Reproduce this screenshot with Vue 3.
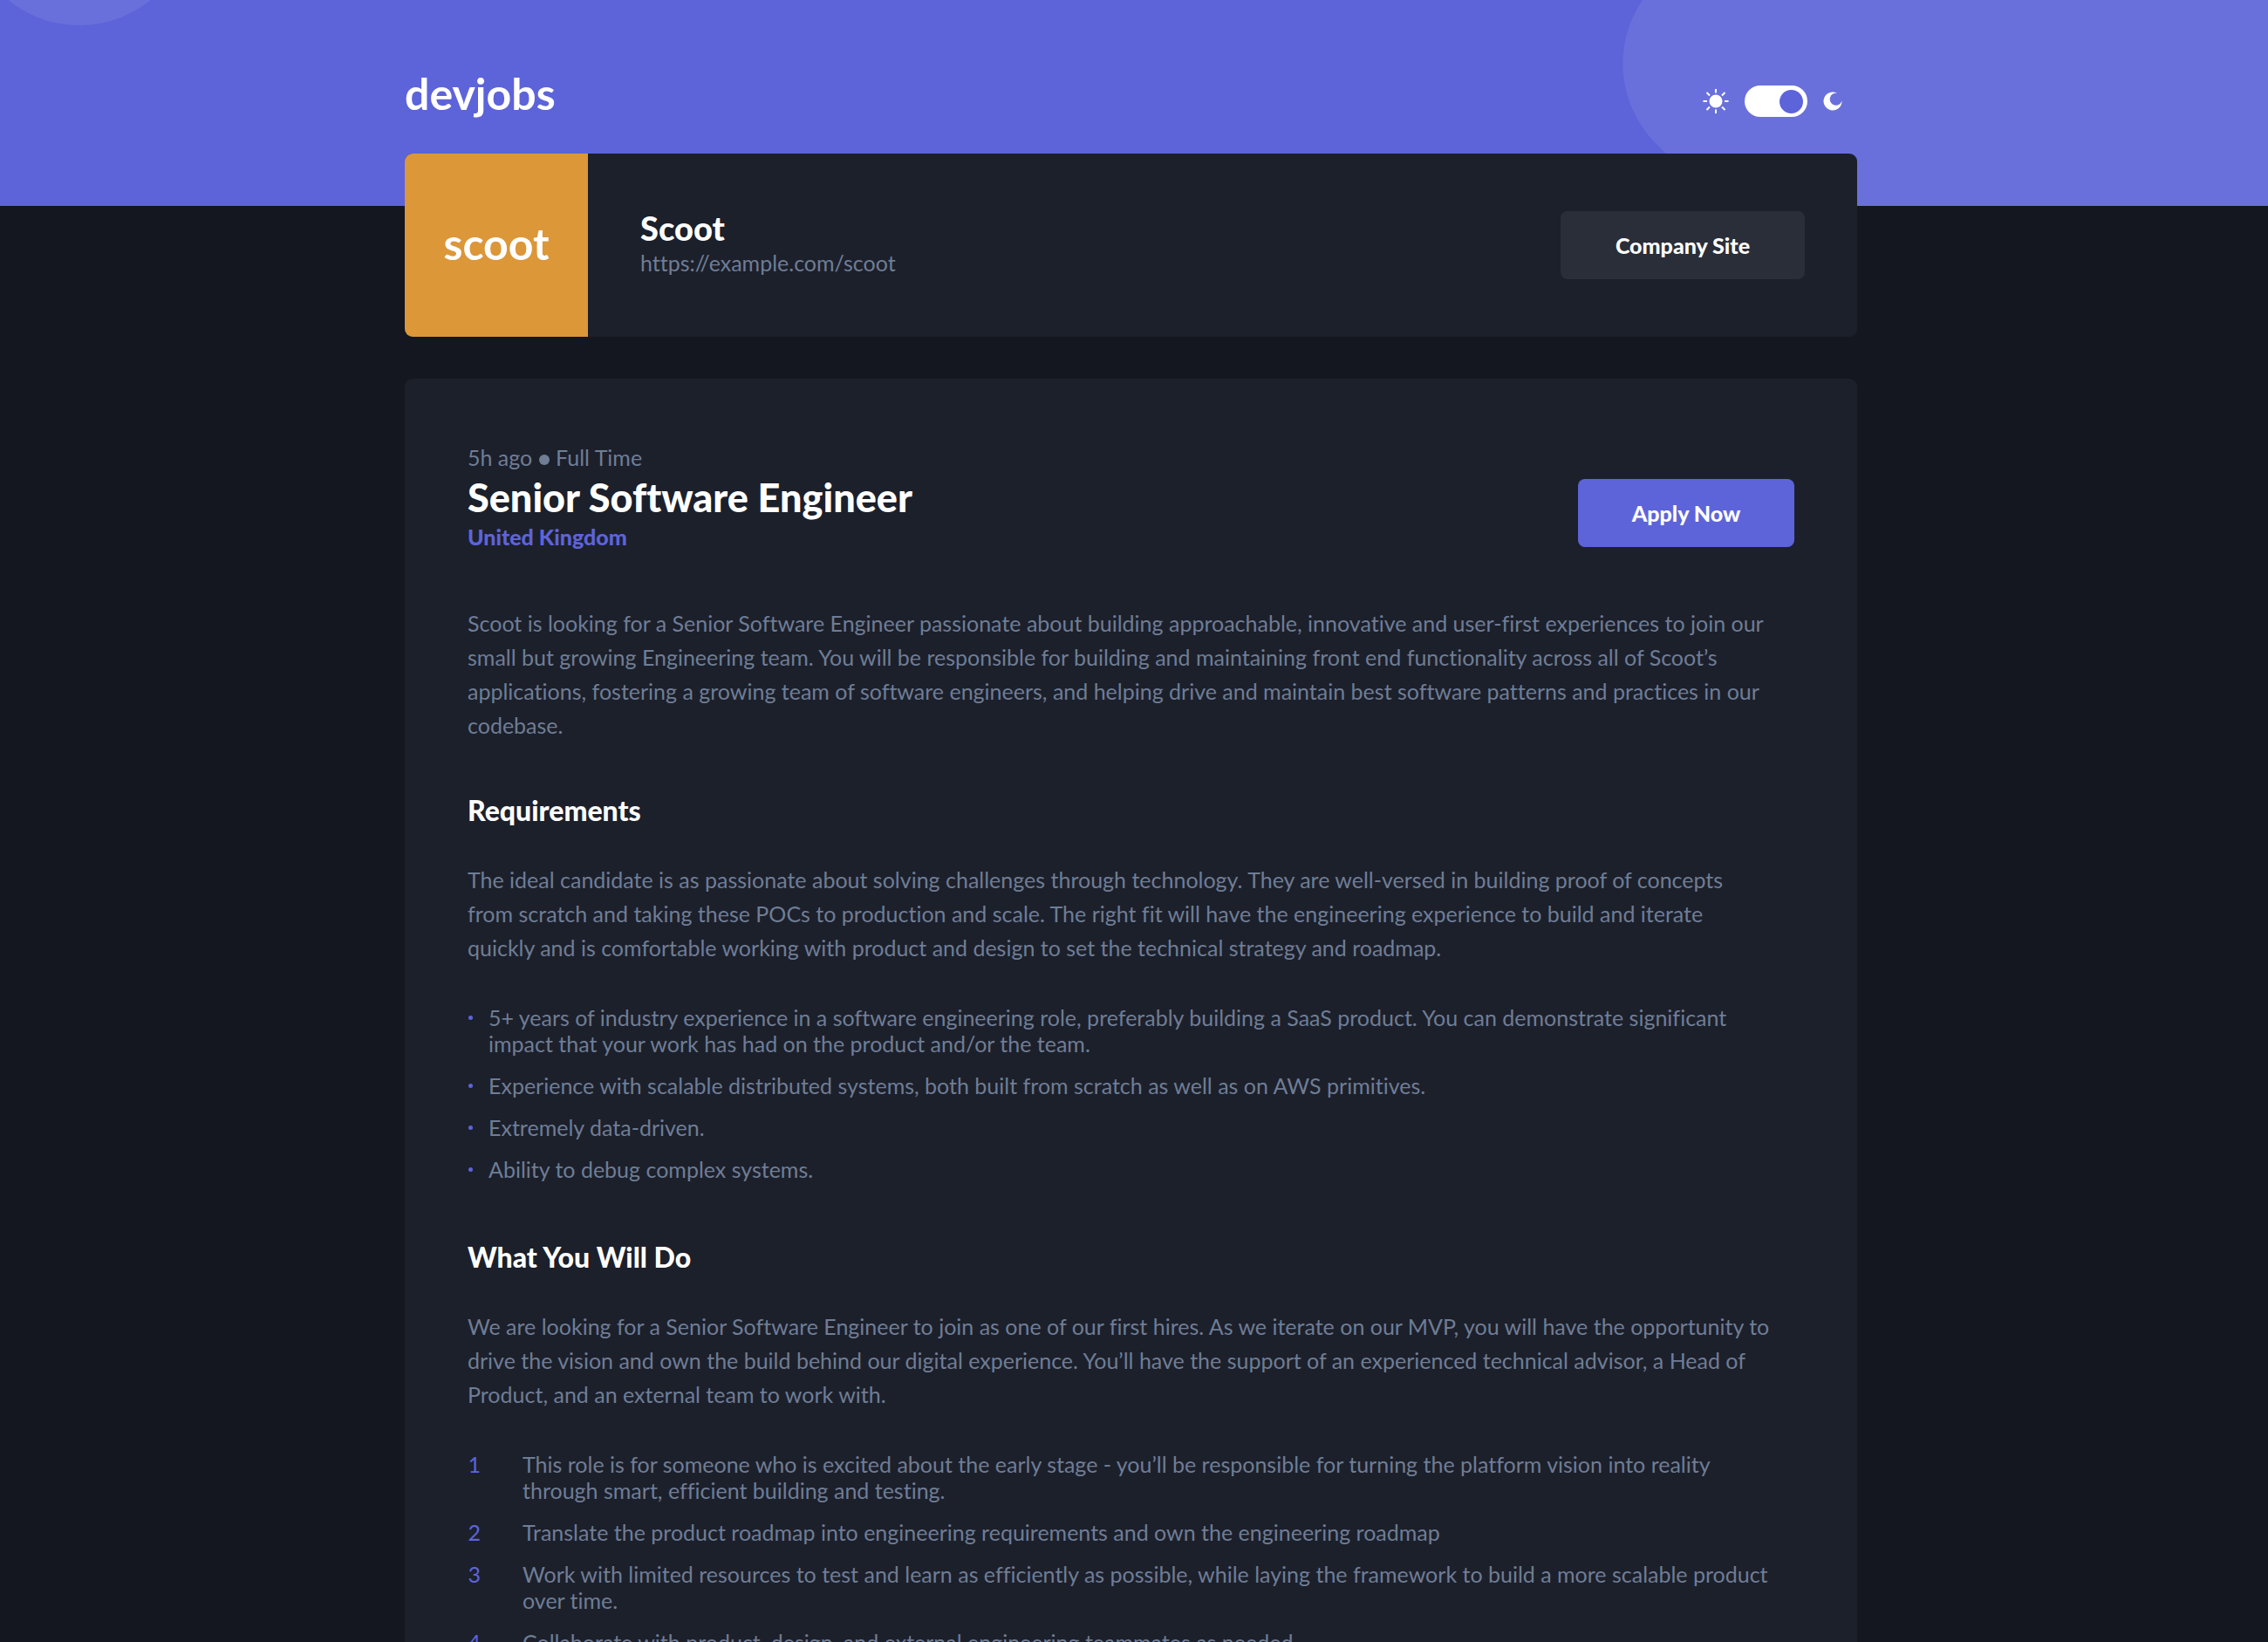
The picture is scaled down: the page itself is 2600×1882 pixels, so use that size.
<script setup>
import { ref } from 'vue'

const dark = ref(true)

const intro = `Scoot is looking for a Senior Software Engineer passionate about building approachable, innovative and user-first experiences to join our
small but growing Engineering team. You will be responsible for building and maintaining front end functionality across all of Scoot’s
applications, fostering a growing team of software engineers, and helping drive and maintain best software patterns and practices in our
codebase.`

const requirementsText = `The ideal candidate is as passionate about solving challenges through technology. They are well-versed in building proof of concepts
from scratch and taking these POCs to production and scale. The right fit will have the engineering experience to build and iterate
quickly and is comfortable working with product and design to set the technical strategy and roadmap.`

const requirements = [
  `5+ years of industry experience in a software engineering role, preferably building a SaaS product. You can demonstrate significant
impact that your work has had on the product and/or the team.`,
  'Experience with scalable distributed systems, both built from scratch as well as on AWS primitives.',
  'Extremely data-driven.',
  'Ability to debug complex systems.',
]

const roleText = `We are looking for a Senior Software Engineer to join as one of our first hires. As we iterate on our MVP, you will have the opportunity to
drive the vision and own the build behind our digital experience. You’ll have the support of an experienced technical advisor, a Head of
Product, and an external team to work with.`

const duties = [
  `This role is for someone who is excited about the early stage - you’ll be responsible for turning the platform vision into reality
through smart, efficient building and testing.`,
  'Translate the product roadmap into engineering requirements and own the engineering roadmap',
  `Work with limited resources to test and learn as efficiently as possible, while laying the framework to build a more scalable product
over time.`,
  'Collaborate with product, design, and external engineering teammates as needed.',
]
</script>

<template>
  <div class="page">
    <header class="banner">
      <svg class="shapes" aria-hidden="true">
        <circle cx="91" cy="-100" r="129" />
        <path d="M1883 0A129 129 0 0 0 1898 164L1970 236H4000V0Z" />
      </svg>
      <div class="wrap bar">
        <a class="logo" href="#">devjobs</a>
        <div class="theme">
          <svg width="30" height="30" viewBox="0 0 30 30" aria-hidden="true">
            <circle cx="15" cy="15" r="7.500" fill="#fff" />
            <path d="M15 1V5.500M15 24.500V29M0.500 15H5M25 15H29.500M4.500 5L8 8.500M22 21.500L25.500 25M4.500 25L8 21.500M22 8.500L25.500 5" stroke="#fff" stroke-width="2" />
          </svg>
          <input v-model="dark" class="switch" type="checkbox" role="switch" aria-label="Dark mode" />
          <svg width="22" height="22" viewBox="0 0 22 22" aria-hidden="true">
            <path d="M16.100 1.800A10.500 10.500 0 1 0 21.500 10.400A7 7 0 1 1 16.100 1.800Z" fill="#fff" />
          </svg>
        </div>
      </div>
    </header>

    <main class="content">
      <div class="wrap">
        <section class="company">
          <div class="brand">scoot</div>
          <div class="who">
            <h2>Scoot</h2>
            <p>https://example.com/scoot</p>
          </div>
          <a class="btn site" href="https://example.com/scoot">Company Site</a>
        </section>

        <article class="job">
          <div class="top">
            <div class="head">
              <p>5h ago <span class="dot"></span> Full Time</p>
              <h1>Senior Software Engineer</h1>
              <p class="place">United Kingdom</p>
            </div>
            <button class="btn apply" type="button">Apply Now</button>
          </div>
          <p class="text">{{ intro }}</p>
          <h3>Requirements</h3>
          <p class="text">{{ requirementsText }}</p>
          <ul>
            <li v-for="item in requirements" :key="item"><span class="text">{{ item }}</span></li>
          </ul>
          <h3>What You Will Do</h3>
          <p class="text">{{ roleText }}</p>
          <ol>
            <li v-for="item in duties" :key="item"><span class="text">{{ item }}</span></li>
          </ol>
        </article>
      </div>
    </main>
  </div>
</template>

<style>
body {
  background: #14171f;
}
</style>

<style scoped>
.page {
  font-family: Lato, "Noto Sans", sans-serif;
  font-size: 25px;
  font-variant-ligatures: none;
  line-height: 39px;
  color: #6f7d95;
}
h1, h2, h3, p, ul, ol {
  margin: 0;
  padding: 0;
}
h1, h2, h3 {
  color: #fff;
  font-weight: 900;
}
.wrap {
  box-sizing: border-box;
  width: 100%;
  max-width: 1665px;
  margin: 0 auto;
}
.banner {
  position: relative;
  box-sizing: border-box;
  height: 236px;
  padding-right: 7px;
  background: #5d64d9;
}
.content {
  padding-right: 7px;
}
.shapes {
  position: absolute;
  inset: 0;
  width: 100%;
  height: 100%;
  fill: #6a70db;
}
.bar {
  position: relative;
  display: flex;
  align-items: flex-end;
  justify-content: space-between;
  padding: 80px 17px 0 0;
}
.logo {
  color: #fff;
  font-size: 50px;
  line-height: 54px;
  font-weight: 700;
  text-decoration: none;
}
.theme {
  display: flex;
  align-items: center;
  gap: 18px;
}
.switch {
  appearance: none;
  display: flex;
  box-sizing: border-box;
  width: 72px;
  height: 36px;
  margin: 0;
  padding: 5px;
  border-radius: 18px;
  background: #fff;
}
.switch::before {
  content: "";
  width: 27px;
  height: 27px;
  border-radius: 50%;
  background: #5d64d9;
}
.switch:checked {
  justify-content: flex-end;
}
.company {
  position: relative;
  display: flex;
  align-items: center;
  height: 210px;
  margin-top: -60px;
  padding-right: 60px;
  border-radius: 9px;
  background: #1c202b;
}
.brand {
  width: 210px;
  border-radius: 9px 0 0 9px;
  background: #dc9739;
  color: #fff;
  font-size: 50px;
  font-weight: 700;
  line-height: 206px;
  text-align: center;
  padding-bottom: 4px;
}
.who {
  flex: 1;
  padding: 0 0 2px 60px;
}
.who h2 {
  font-size: 38px;
  line-height: 42px;
}
.btn {
  box-sizing: border-box;
  height: 78px;
  padding: 0 40px;
  border: 0;
  border-radius: 8px;
  color: #fff;
  font: inherit;
  font-weight: 900;
  line-height: 78px;
  text-align: center;
  text-decoration: none;
}
.site {
  min-width: 280px;
  background: #2a2e39;
}
.apply {
  min-width: 248px;
  background: #5d64d9;
}
.job {
  margin-top: 48px;
  padding: 71px 72px 72px;
  border-radius: 9px;
  background: #1c202b;
}
.top {
  display: flex;
  align-items: center;
  justify-content: space-between;
  height: 166px;
  margin-bottom: 24px;
}
.head {
  align-self: flex-start;
}
.dot {
  display: inline-block;
  width: 12px;
  height: 12px;
  margin: 0 1px;
  border-radius: 50%;
  background: #6f7d95;
  vertical-align: 1px;
}
h1 {
  font-size: 45px;
  line-height: 52px;
}
.place {
  color: #5d64d9;
  font-weight: 900;
}
h3 {
  margin: 59px 0 41px;
  font-size: 32px;
  line-height: 38px;
}
.text {
  white-space: pre-line;
}
ul, ol {
  display: flex;
  flex-direction: column;
  gap: 18px;
  margin-top: 45px;
  line-height: 30px;
  list-style: none;
}
ul {
  margin-bottom: 67px;
}
li {
  display: grid;
}
ul li {
  grid-template-columns: 6px 1fr;
  column-gap: 18px;
}
ul li::before {
  content: "";
  justify-self: center;
  width: 5px;
  height: 5px;
  margin-top: 13px;
  border-radius: 50%;
  background: #5d64d9;
}
ol {
  counter-reset: duty;
}
ol li {
  grid-template-columns: 15px 1fr;
  column-gap: 48px;
  counter-increment: duty;
}
ol li::before {
  content: counter(duty);
  color: #5d64d9;
  text-align: right;
}
</style>
